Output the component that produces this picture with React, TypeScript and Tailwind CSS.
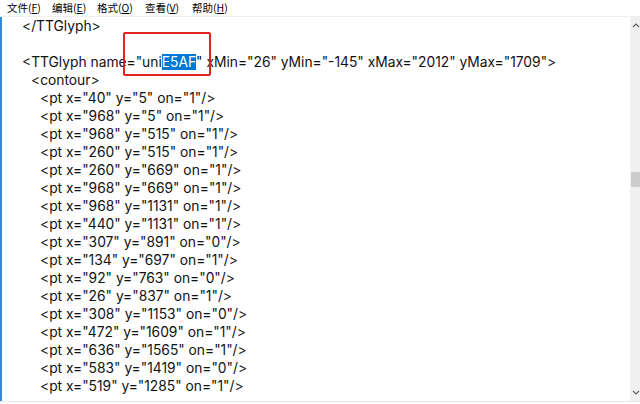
import React from "react";

const pts: [string, string, string][] = [
  ["40", "5", "1"],
  ["968", "5", "1"],
  ["968", "515", "1"],
  ["260", "515", "1"],
  ["260", "669", "1"],
  ["968", "669", "1"],
  ["968", "1131", "1"],
  ["440", "1131", "1"],
  ["307", "891", "0"],
  ["134", "697", "1"],
  ["92", "763", "0"],
  ["26", "837", "1"],
  ["308", "1153", "0"],
  ["472", "1609", "1"],
  ["636", "1565", "1"],
  ["583", "1419", "0"],
  ["519", "1285", "1"],
];

function Words({ text }: { text: string }) {
  const parts = text.split(" ");
  return (
    <>
      {parts.map((p, i) => (
        <React.Fragment key={i}>
          {i > 0 && " "}
          <span>{p}</span>
        </React.Fragment>
      ))}
    </>
  );
}

export default function App() {
  return (
    <div
      className="w-[640px] h-[404px] bg-white flex flex-col overflow-hidden text-black"
      style={{ fontFamily: '"Noto Sans CJK SC", "Noto Sans", sans-serif' }}
    >
      <div className="h-[17px] flex items-center border-b border-[#f0f0f0] text-[10.5px] leading-[14px] pl-[7px]">
        <span className="w-[45px] whitespace-pre">文件(<span className="underline">F</span>)</span>
        <span className="w-[45px] whitespace-pre">编辑(<span className="underline">E</span>)</span>
        <span className="w-[48px] whitespace-pre">格式(<span className="underline">O</span>)</span>
        <span className="w-[47px] whitespace-pre">查看(<span className="underline">V</span>)</span>
        <span className="w-[47px] whitespace-pre">帮助(<span className="underline">H</span>)</span>
      </div>
      <div className="flex-1 flex min-h-0">
        <div className="w-[2px] bg-[#2b8ad9]" />
        <div
          className="flex-1 relative text-[13.8px] border-r border-[#f4f4f4] pb-[2px] text-[#111]"
          style={{ fontFamily: 'Inter, "Noto Sans", sans-serif' }}
        >
          <div className="h-[18px] leading-[18px] pl-[20px] whitespace-pre">{"</TTGlyph>"}</div>
          <div className="h-[18px]" />
          <div className="h-[18px] leading-[18px] pl-[20px] whitespace-pre">
            <span>{"<TTGlyph"}</span> <span>{'name="uni'}</span>
            <span className="bg-[#0078d7] text-white">E5AF</span>
            <span>{'"'}</span> <Words text={'xMin="26" yMin="-145" xMax="2012" yMax="1709">'} />
          </div>
          <div className="h-[18px] leading-[18px] pl-[29px] whitespace-pre">{"<contour>"}</div>
          {pts.map(([x, y, on], i) => (
            <div key={i} className="h-[18px] leading-[18px] pl-[38px] whitespace-pre">
              <Words text={`<pt x="${x}" y="${y}" on="${on}"/>`} />
            </div>
          ))}
          <div className="absolute left-[121px] top-[15px] w-[88px] h-[44px] border-2 border-[#e3231f] rounded-[2px]" />
        </div>
        <div className="w-[9px] bg-[#f0f0f0] flex flex-col items-center">
          <div className="h-[16px] flex items-center justify-center">
            <svg width="8" height="6" viewBox="0 0 8 6"><path d="M1 5 L4 2 L7 5" fill="none" stroke="#606060" strokeWidth="1.2" /></svg>
          </div>
          <div className="h-[139px]" />
          <div className="w-full h-[15px] bg-[#cdcdcd]" />
          <div className="flex-1" />
          <div className="h-[16px] flex items-center justify-center">
            <svg width="8" height="6" viewBox="0 0 8 6"><path d="M1 1 L4 4 L7 1" fill="none" stroke="#606060" strokeWidth="1.2" /></svg>
          </div>
        </div>
      </div>
      <div className="h-[3px] border-t border-[#e8e8e8] bg-white" />
    </div>
  );
}
